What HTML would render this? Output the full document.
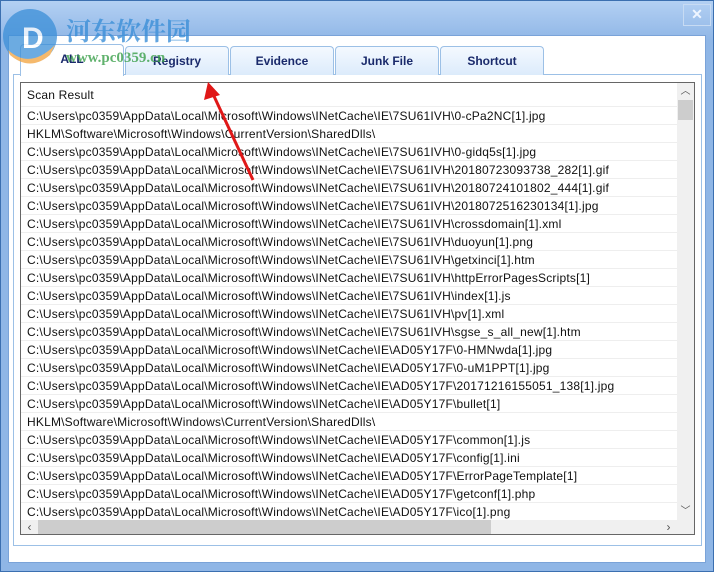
<!DOCTYPE html>
<html><head><style>
body{margin:0;width:714px;height:572px;overflow:hidden;background:#fff;font-family:"Liberation Sans",sans-serif;}
.win{position:absolute;left:0;top:0;width:712px;height:570px;border:1px solid #3b6fb0;background:linear-gradient(#b3d0f3,#8fb6e6 40px,#8fb6e6);}
.client{position:absolute;left:8px;top:35px;width:698px;height:528px;background:#fff;border:1px solid #7aa3d8;box-sizing:border-box;}
.panel{position:absolute;left:13px;top:74px;width:689px;height:472px;border:1px solid #9cc0e6;box-sizing:border-box;}
.tab{position:absolute;top:46px;height:29px;width:104px;box-sizing:border-box;border:1px solid #9cc0e6;border-bottom:none;border-radius:4px 4px 0 0;background:linear-gradient(#f4f9ff,#dcebfb);font:bold 12px "Liberation Sans",sans-serif;color:#1a2a6b;text-align:center;line-height:28px;}
.tab.act{background:#fff;top:44px;height:32px;}
.list{position:absolute;left:20px;top:82px;width:675px;height:453px;border:1px solid #666;box-sizing:border-box;background:#fff;overflow:hidden;}
.row{height:18px;line-height:18px;font-size:12px;color:#111;padding-left:6px;border-bottom:1px solid #eee;box-sizing:border-box;white-space:nowrap;letter-spacing:0.2px;}
.vs{position:absolute;right:0;top:0;width:17px;height:437px;background:#f0f0f0;}
.hs{position:absolute;left:0;bottom:0;width:673px;height:14px;background:#f0f0f0;}
</style></head><body>
<div class="win"></div>
<div style="position:absolute;left:683px;top:4px;width:26px;height:20px;border:1px solid #c7dbf3;color:#eef5ff;font:bold 14px sans-serif;text-align:center;line-height:19px;">✕</div>
<div class="client"></div>
<div class="panel"></div>
<div class="tab act" style="left:20px">ALL</div>
<div class="tab" style="left:125px">Registry</div>
<div class="tab" style="left:230px">Evidence</div>
<div class="tab" style="left:335px">Junk File</div>
<div class="tab" style="left:440px">Shortcut</div>
<div class="list">
<div class="row" style="height:24px;line-height:25px">Scan Result</div>
<div class="row">C:\Users\pc0359\AppData\Local\Microsoft\Windows\INetCache\IE\7SU61IVH\0-cPa2NC[1].jpg</div>
<div class="row">HKLM\Software\Microsoft\Windows\CurrentVersion\SharedDlls\</div>
<div class="row">C:\Users\pc0359\AppData\Local\Microsoft\Windows\INetCache\IE\7SU61IVH\0-gidq5s[1].jpg</div>
<div class="row">C:\Users\pc0359\AppData\Local\Microsoft\Windows\INetCache\IE\7SU61IVH\20180723093738_282[1].gif</div>
<div class="row">C:\Users\pc0359\AppData\Local\Microsoft\Windows\INetCache\IE\7SU61IVH\20180724101802_444[1].gif</div>
<div class="row">C:\Users\pc0359\AppData\Local\Microsoft\Windows\INetCache\IE\7SU61IVH\2018072516230134[1].jpg</div>
<div class="row">C:\Users\pc0359\AppData\Local\Microsoft\Windows\INetCache\IE\7SU61IVH\crossdomain[1].xml</div>
<div class="row">C:\Users\pc0359\AppData\Local\Microsoft\Windows\INetCache\IE\7SU61IVH\duoyun[1].png</div>
<div class="row">C:\Users\pc0359\AppData\Local\Microsoft\Windows\INetCache\IE\7SU61IVH\getxinci[1].htm</div>
<div class="row">C:\Users\pc0359\AppData\Local\Microsoft\Windows\INetCache\IE\7SU61IVH\httpErrorPagesScripts[1]</div>
<div class="row">C:\Users\pc0359\AppData\Local\Microsoft\Windows\INetCache\IE\7SU61IVH\index[1].js</div>
<div class="row">C:\Users\pc0359\AppData\Local\Microsoft\Windows\INetCache\IE\7SU61IVH\pv[1].xml</div>
<div class="row">C:\Users\pc0359\AppData\Local\Microsoft\Windows\INetCache\IE\7SU61IVH\sgse_s_all_new[1].htm</div>
<div class="row">C:\Users\pc0359\AppData\Local\Microsoft\Windows\INetCache\IE\AD05Y17F\0-HMNwda[1].jpg</div>
<div class="row">C:\Users\pc0359\AppData\Local\Microsoft\Windows\INetCache\IE\AD05Y17F\0-uM1PPT[1].jpg</div>
<div class="row">C:\Users\pc0359\AppData\Local\Microsoft\Windows\INetCache\IE\AD05Y17F\20171216155051_138[1].jpg</div>
<div class="row">C:\Users\pc0359\AppData\Local\Microsoft\Windows\INetCache\IE\AD05Y17F\bullet[1]</div>
<div class="row">HKLM\Software\Microsoft\Windows\CurrentVersion\SharedDlls\</div>
<div class="row">C:\Users\pc0359\AppData\Local\Microsoft\Windows\INetCache\IE\AD05Y17F\common[1].js</div>
<div class="row">C:\Users\pc0359\AppData\Local\Microsoft\Windows\INetCache\IE\AD05Y17F\config[1].ini</div>
<div class="row">C:\Users\pc0359\AppData\Local\Microsoft\Windows\INetCache\IE\AD05Y17F\ErrorPageTemplate[1]</div>
<div class="row">C:\Users\pc0359\AppData\Local\Microsoft\Windows\INetCache\IE\AD05Y17F\getconf[1].php</div>
<div class="row">C:\Users\pc0359\AppData\Local\Microsoft\Windows\INetCache\IE\AD05Y17F\ico[1].png</div>
<div class="vs"><div style="position:absolute;top:0;height:17px;width:17px;text-align:center;font-size:10px;color:#555;line-height:17px">︿</div><div style="position:absolute;top:17px;left:1px;width:15px;height:20px;background:#cdcdcd"></div><div style="position:absolute;bottom:0;height:17px;width:17px;text-align:center;font-size:10px;color:#555;line-height:17px">﹀</div></div>
<div class="hs"><div style="position:absolute;left:0;width:17px;height:14px;text-align:center;font-size:12px;color:#555;line-height:14px">‹</div><div style="position:absolute;left:17px;top:0;width:453px;height:14px;background:#cdcdcd"></div><div style="position:absolute;right:17px;width:17px;height:14px;text-align:center;font-size:12px;color:#555;line-height:14px">›</div></div>
</div>
<svg style="position:absolute;left:0;top:0" width="714" height="572">
<g opacity="0.75">
<circle cx="30" cy="36" r="27" fill="#3b8fd8"/>
<path d="M8 50 Q30 70 55 45 L50 55 Q30 72 10 55Z" fill="#f2a23c"/>
<text x="22" y="48" font-family="Liberation Sans,sans-serif" font-weight="bold" font-size="30" fill="#fff">D</text>
</g>
<text x="66" y="40" font-family="'Liberation Serif','Noto Serif CJK SC',serif" font-weight="bold" font-size="25" fill="#3b8fd8" opacity="0.8">河东软件园</text>
<text x="66" y="62" font-family="'Liberation Serif',serif" font-weight="bold" font-size="15" fill="#3aa04a" opacity="0.8">www.pc0359.cn</text>
<line x1="253" y1="180" x2="213" y2="94" stroke="#e01818" stroke-width="3"/>
<polygon points="208,82 204,100 220,95" fill="#e01818"/>
</svg>
</body></html>
